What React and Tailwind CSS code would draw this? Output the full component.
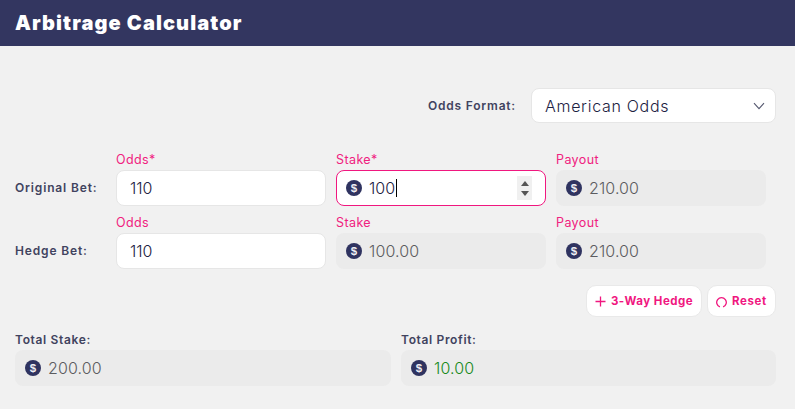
import React from "react";

function Dollar() {
  return (
    <svg width="16" height="16" viewBox="0 0 16 16" className="shrink-0">
      <circle cx="8" cy="8" r="8" fill="#2f3360" />
      <text x="8" y="12" textAnchor="middle" fontSize="11.5" fontWeight="700" fill="#eeeef3" fontFamily="'Liberation Sans', sans-serif">$</text>
    </svg>
  );
}

function FieldLabel({ children }) {
  return <div className="h-[19px] text-[12.5px] leading-[17px] tracking-[0.4px] text-[#f0217f]">{children}</div>;
}

function WhiteBox({ children }) {
  return (
    <div className="flex h-[36px] items-center rounded-[8px] border border-[#e6e6e6] bg-white pl-[13px] text-[16px] font-light text-[#1c2142]">
      {children}
    </div>
  );
}

function ReadBox({ value, color = "text-[#5c5c60]" }) {
  return (
    <div className={`flex h-[36px] items-center gap-[7px] rounded-[8px] bg-[#ebebeb] pl-[10px] text-[16px] font-light tracking-[0.1px] ${color}`}>
      <Dollar />
      <span>{value}</span>
    </div>
  );
}

function Row({ name, children }) {
  return (
    <div className="grid grid-cols-[91px_210px_210px_210px] items-end gap-x-[10px]">
      <div className="flex h-[36px] items-center text-[12px] font-semibold tracking-[0.85px] text-[#41435f]">{name}</div>
      {children}
    </div>
  );
}

export default function App() {
  return (
    <div className="h-[409px] w-[795px] overflow-hidden bg-[#f1f1f1] font-['Inter',sans-serif]">
      <header className="flex h-[46px] items-center bg-[#333660] pb-[1px] pl-[15px]">
        <h1 className="text-[20px] font-black tracking-[1.1px] text-white">Arbitrage Calculator</h1>
      </header>

      <main className="px-[15px] pt-[42px]">
        <div className="flex items-center justify-end gap-[15px] pr-[4px]">
          <span className="text-[12px] font-semibold tracking-[0.8px] text-[#41435f]">Odds Format:</span>
          <div className="flex h-[35px] w-[245px] items-center justify-between rounded-[8px] border border-[#e6e6e6] bg-white pl-[13px] pr-[10px] text-[16px] font-light tracking-[0.7px] text-[#1c2142]">
            <span>American Odds</span>
            <svg width="12" height="8" viewBox="0 0 12 8" fill="none" stroke="#55586f" strokeWidth="1.1">
              <path d="M1 1.2 L6 6.6 L11 1.2" />
            </svg>
          </div>
        </div>

        <div className="mt-[28px] flex flex-col gap-[8px]">
          <Row name="Original Bet:">
            <div>
              <FieldLabel>Odds*</FieldLabel>
              <WhiteBox>110</WhiteBox>
            </div>
            <div>
              <FieldLabel>Stake*</FieldLabel>
              <div className="flex h-[36px] items-center gap-[7px] rounded-[8px] border border-[#f0177f] bg-white pl-[9px] pr-[13px] text-[16px] font-light text-[#1c2142]">
                <Dollar />
                <span className="border-r border-black pr-[0.5px] leading-[18px]">100</span>
                <div className="ml-auto flex h-[24px] w-[15px] flex-col items-center justify-center gap-[5px] bg-[#f0f0f0]">
                  <svg width="8" height="5" viewBox="0 0 8 5"><path d="M4 0 L8 5 L0 5 Z" fill="#555" /></svg>
                  <svg width="8" height="5" viewBox="0 0 8 5"><path d="M0 0 L8 0 L4 5 Z" fill="#555" /></svg>
                </div>
              </div>
            </div>
            <div>
              <FieldLabel>Payout</FieldLabel>
              <ReadBox value="210.00" />
            </div>
          </Row>

          <Row name="Hedge Bet:">
            <div>
              <FieldLabel>Odds</FieldLabel>
              <WhiteBox>110</WhiteBox>
            </div>
            <div>
              <FieldLabel>Stake</FieldLabel>
              <ReadBox value="100.00" />
            </div>
            <div>
              <FieldLabel>Payout</FieldLabel>
              <ReadBox value="210.00" />
            </div>
          </Row>
        </div>

        <div className="mt-[16px] flex justify-end gap-[5px] pr-[4px]">
          <button className="flex h-[32px] w-[116px] items-center justify-center gap-[5px] rounded-[10px] border border-[#e9e9e9] bg-white pt-[1px] text-[11.5px] font-bold tracking-[0.5px] text-[#f0177f]">
            <svg width="11" height="11" viewBox="0 0 11 11" stroke="#f0177f" strokeWidth="1.3"><path d="M5.5 0.5 V10.5 M0.5 5.5 H10.5" /></svg>
            3-Way Hedge
          </button>
          <button className="flex h-[32px] w-[69px] items-center justify-center gap-[5px] rounded-[10px] border border-[#e9e9e9] bg-white pt-[1px] text-[11.5px] font-bold tracking-[0.6px] text-[#f0177f]">
            <svg width="11" height="12" viewBox="0 0 11 12" fill="none" stroke="#f0177f" strokeWidth="1.3"><path d="M3.9 10.9 A4.8 4.8 0 1 1 7.1 10.9" /></svg>
            Reset
          </button>
        </div>

        <div className="mt-[13px] grid grid-cols-[376px_375px] gap-x-[10px] pr-[4px]">
          <div>
            <div className="h-[20px] text-[12px] font-semibold leading-[20px] tracking-[0.65px] text-[#41435f]">Total Stake:</div>
            <ReadBox value="200.00" />
          </div>
          <div>
            <div className="h-[20px] text-[12px] font-semibold leading-[20px] tracking-[0.65px] text-[#41435f]">Total Profit:</div>
            <ReadBox value="10.00" color="text-[#178a1c]" />
          </div>
        </div>
      </main>
    </div>
  );
}
